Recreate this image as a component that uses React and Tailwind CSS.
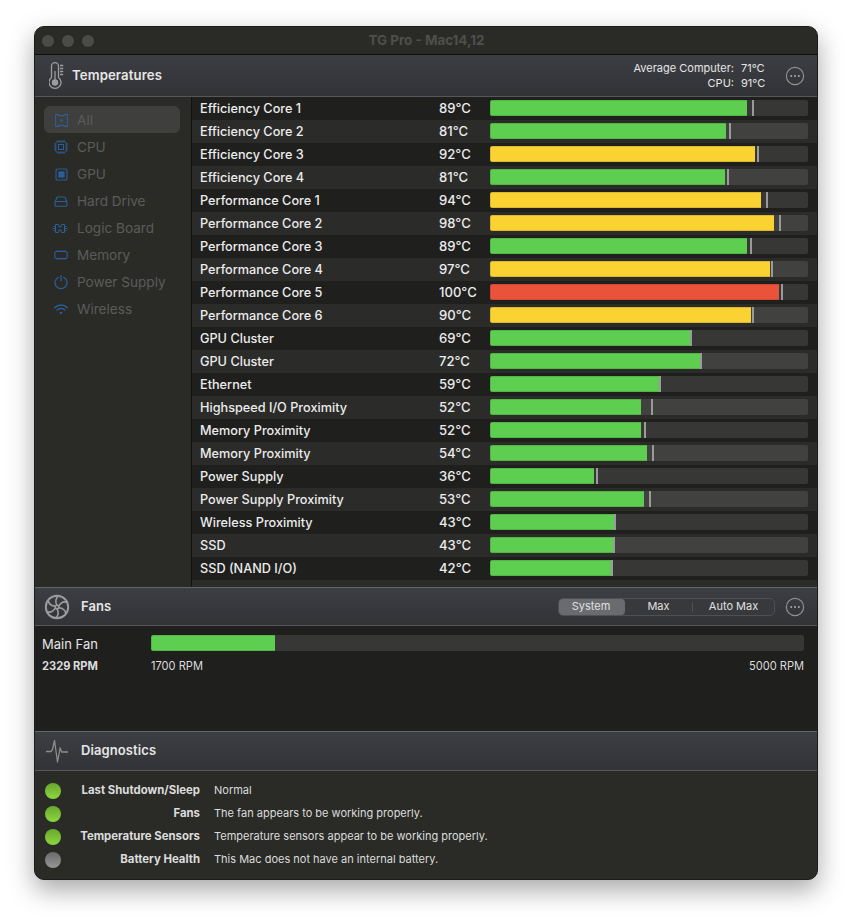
import React from "react";

const rows = [
  ["Efficiency Core 1", "89°C", 257, 262, "g"],
  ["Efficiency Core 2", "81°C", 236, 239, "g"],
  ["Efficiency Core 3", "92°C", 265, 267, "y"],
  ["Efficiency Core 4", "81°C", 235, 237, "g"],
  ["Performance Core 1", "94°C", 271, 276, "y"],
  ["Performance Core 2", "98°C", 284, 289, "y"],
  ["Performance Core 3", "89°C", 257, 260, "g"],
  ["Performance Core 4", "97°C", 280, 281, "y"],
  ["Performance Core 5", "100°C", 289, 291, "r"],
  ["Performance Core 6", "90°C", 261, 262, "y"],
  ["GPU Cluster", "69°C", 201, 200, "g"],
  ["GPU Cluster", "72°C", 210, 210, "g"],
  ["Ethernet", "59°C", 170, 169, "g"],
  ["Highspeed I/O Proximity", "52°C", 151, 161, "g"],
  ["Memory Proximity", "52°C", 151, 154, "g"],
  ["Memory Proximity", "54°C", 157, 162, "g"],
  ["Power Supply", "36°C", 104, 106, "g"],
  ["Power Supply Proximity", "53°C", 154, 159, "g"],
  ["Wireless Proximity", "43°C", 124, 124, "g"],
  ["SSD", "43°C", 123, 123, "g"],
  ["SSD (NAND I/O)", "42°C", 122, 121, "g"],
];

const fillCls = {
  g: "bg-[#5dce50] border-[#52b647]",
  y: "bg-[#fad232] border-[#dcb92c]",
  r: "bg-[#ea523a] border-[#cf4833]",
};

const blue = "#2b5f99";

function IconAll() {
  return (
    <svg width="13" height="13" viewBox="0 0 13 13" fill="none" stroke={blue} strokeWidth="1.1">
      <path d="M.6.6h3l.6 1h4.6l.6-1h3v11.8h-3l-.6-1H4.2l-.6 1h-3z" />
      <circle cx="6.5" cy="6.5" r="1.2" fill={blue} stroke="none" />
    </svg>
  );
}
function IconCpu() {
  return (
    <svg width="14" height="14" viewBox="0 0 14 14" fill="none" stroke={blue} strokeWidth="1">
      <rect x="1.8" y="1.8" width="10.4" height="10.4" rx="1.5" />
      <rect x="4.5" y="4.5" width="5" height="5" />
      <path d="M4 0v1.8M6 0v1.8M8 0v1.8M10 0v1.8M4 12.2V14M6 12.2V14M8 12.2V14M10 12.2V14M0 4h1.8M0 6h1.8M0 8h1.8M0 10h1.8M12.2 4H14M12.2 6H14M12.2 8H14M12.2 10H14" strokeWidth="0.8" />
    </svg>
  );
}
function IconGpu() {
  return (
    <svg width="13" height="13" viewBox="0 0 13 13" fill="none" stroke={blue} strokeWidth="1.1">
      <rect x="1" y="1" width="11" height="11" rx="1.5" />
      <rect x="3.4" y="3.4" width="6.2" height="6.2" fill={blue} stroke="none" />
    </svg>
  );
}
function IconDrive() {
  return (
    <svg width="14" height="11" viewBox="0 0 14 11" fill="none" stroke={blue} strokeWidth="1.1">
      <path d="M1 6l1.8-4.2A1.4 1.4 0 0 1 4 1h6a1.4 1.4 0 0 1 1.2.8L13 6" />
      <rect x="1" y="5.5" width="12" height="4.8" rx="1.4" />
    </svg>
  );
}
function IconBoard() {
  return (
    <svg width="16" height="11" viewBox="0 0 16 11" fill="none" stroke={blue} strokeWidth="1">
      <path d="M3.5 1.5h2.6a.8.8 0 0 1 .8.8V4h2.2V2.3a.8.8 0 0 1 .8-.8h2.6v8H9.9a.8.8 0 0 1-.8-.8V7H6.9v1.7a.8.8 0 0 1-.8.8H3.5z" />
      <path d="M1.5 3.5h2M1.5 7.5h2M12.5 3.5h2M12.5 7.5h2M0.5 5.5h3M12.5 5.5h3" strokeWidth="0.9" />
    </svg>
  );
}
function IconMem() {
  return (
    <svg width="14" height="10" viewBox="0 0 14 10" fill="none" stroke={blue} strokeWidth="1.1">
      <rect x="0.8" y="1.5" width="12.4" height="7" rx="1.5" />
      <path d="M3 0v1M5 0v1M7 0v1M9 0v1M11 0v1M3 9v1M5 9v1M7 9v1M9 9v1M11 9v1" strokeWidth="0.7" />
    </svg>
  );
}
function IconPower() {
  return (
    <svg width="14" height="14" viewBox="0 0 14 14" fill="none" stroke={blue} strokeWidth="1.2" strokeLinecap="round">
      <path d="M4.4 2.3a6 6 0 1 0 5.2 0" />
      <path d="M7 0.6v5.4" />
    </svg>
  );
}
function IconWifi() {
  return (
    <svg width="14" height="11" viewBox="0 0 14 11" fill="none" stroke={blue} strokeWidth="1.5" strokeLinecap="round">
      <path d="M0.8 3.6a9 9 0 0 1 12.4 0" />
      <path d="M3.2 6a5.6 5.6 0 0 1 7.6 0" />
      <path d="M7 10.2L5.4 8.4a2.4 2.4 0 0 1 3.2 0z" fill={blue} stroke="none" />
    </svg>
  );
}

const side = [
  ["All", IconAll],
  ["CPU", IconCpu],
  ["GPU", IconGpu],
  ["Hard Drive", IconDrive],
  ["Logic Board", IconBoard],
  ["Memory", IconMem],
  ["Power Supply", IconPower],
  ["Wireless", IconWifi],
];

function More() {
  return (
    <svg width="20" height="20" viewBox="0 0 20 20" fill="none">
      <circle cx="10" cy="10" r="8.6" stroke="#8f9092" strokeWidth="1.2" />
      <circle cx="6.2" cy="10" r="1" fill="#a8a9aa" />
      <circle cx="10" cy="10" r="1" fill="#a8a9aa" />
      <circle cx="13.8" cy="10" r="1" fill="#a8a9aa" />
    </svg>
  );
}

function Thermo() {
  return (
    <svg width="16" height="28" viewBox="0 0 16 28" fill="none" stroke="#9b9c9d">
      <path d="M2.5 15.5V4.2a3.5 3.5 0 0 1 7 0v11.3a6 6 0 1 1-7 0z" strokeWidth="1.3" />
      <circle cx="6" cy="20.5" r="3.2" fill="#9b9c9d" stroke="none" />
      <path d="M6 9v10" strokeWidth="1.3" />
      <path d="M11 3.5h3.2M11 6.5h3.2M11 9.5h3.2M11 12.5h3.2" strokeWidth="1.3" />
    </svg>
  );
}

function Fan() {
  return (
    <svg width="26" height="26" viewBox="0 0 26 26" fill="none" stroke="#9b9c9d" strokeWidth="1.6">
      <circle cx="13" cy="13" r="11.2" strokeWidth="2" />
      <circle cx="13" cy="13" r="1.8" />
      <path d="M13 11.2C11 8 11.5 4 14.5 1.8" />
      <path d="M14.7 12.2C16.5 8.8 20 7.2 23.6 8.4" />
      <path d="M14.7 13.8C18.5 14 21.4 16.4 22 20" />
      <path d="M13 14.8C15 18 14.5 22 11.5 24.2" />
      <path d="M11.3 13.8C9.5 17.2 6 18.8 2.4 17.6" />
      <path d="M11.3 12.2C7.5 12 4.6 9.6 4 6" />
    </svg>
  );
}

function Pulse() {
  return (
    <svg width="24" height="24" viewBox="0 0 24 24" fill="none" stroke="#8c8d8e" strokeWidth="1.3" strokeLinejoin="round">
      <path d="M1 12.5h5l1.5-2 2-9 3 21.5 2.6-14 1.6 4h6.3" />
    </svg>
  );
}

function Header({ icon, title, children, h, iconPad, titlePad }) {
  return (
    <div className={`${h} shrink-0 flex items-center border-t border-b border-t-[#646565] border-b-[#56575a] bg-gradient-to-b from-[#3d3e43] to-[#323337]`}>
      <div className={`w-[46px] flex justify-center shrink-0 ${iconPad}`}>{icon}</div>
      <div className={`text-[13px] font-semibold text-[#e6e6e6] tracking-[0.1px] ${titlePad}`}>{title}</div>
      <div className="ml-auto flex items-center">{children}</div>
    </div>
  );
}

const diag = [
  ["Last Shutdown/Sleep", "Normal", true],
  ["Fans", "The fan appears to be working properly.", true],
  ["Temperature Sensors", "Temperature sensors appear to be working properly.", true],
  ["Battery Health", "This Mac does not have an internal battery.", false],
];

export default function App() {
  return (
    <div className="w-[852px] h-[922px] bg-white pt-[26px] pl-[34px] overflow-hidden font-['Inter',sans-serif]">
      <div className="w-[784px] h-[854px] rounded-[10px] overflow-hidden flex flex-col bg-[#2a2b27] border border-[#1c1c1c] shadow-[0_10px_26px_rgba(0,0,0,0.35)]">
        {/* title bar */}
        <div className="h-[28px] shrink-0 flex items-center border-b border-[#0c0c0c] bg-[#2a2b27] pl-[7px] gap-[8px]">
          <div className="w-[12px] h-[12px] rounded-full bg-[#4b4c49]" />
          <div className="w-[12px] h-[12px] rounded-full bg-[#4b4c49]" />
          <div className="w-[12px] h-[12px] rounded-full bg-[#4b4c49]" />
          <div className="flex-1 text-center text-[13.4px] font-bold text-[#4e4f4d] pr-[66px]">TG Pro - Mac14,12</div>
        </div>

        {/* temperatures header */}
        <div className="h-[42px] shrink-0 flex items-center border-b border-[#56575a] bg-gradient-to-b from-[#3d3e43] to-[#323337]">
          <div className="w-[37px] flex justify-end shrink-0 pr-[7px]"><Thermo /></div>
          <div className="text-[13.2px] font-semibold text-[#e6e6e6] tracking-[0.1px]">Temperatures</div>
          <div className="ml-auto text-[11px] leading-[15px] text-[#e6e6e6] grid grid-cols-[auto_32px] gap-x-[7px] text-right">
            <span>Average Computer:</span><span className="text-left">71°C</span>
            <span>CPU:</span><span className="text-left">91°C</span>
          </div>
          <div className="ml-[12px] mr-[12px] flex"><More /></div>
        </div>

        {/* middle */}
        <div className="h-[490px] shrink-0 flex">
          <div className="w-[157px] shrink-0 border-r border-[#121212] pt-[9px] pl-[9px] pr-[11px]">
            {side.map(([label, Icon], i) => (
              <div key={label} className={`h-[27px] pt-[1px] flex items-center rounded-[6px] ${i === 0 ? "bg-[#3f3f3d]" : ""}`}>
                <div className="w-[33px] flex justify-end shrink-0 pr-[9px]"><Icon /></div>
                <span className="text-[13.6px] text-[#5b5c5a]">{label}</span>
              </div>
            ))}
          </div>
          <div className="flex-1 bg-[#2b2b2a] flex flex-col">
            {rows.map(([name, temp, fill, mark, c], i) => (
              <div key={i} className={`h-[23px] shrink-0 flex items-center ${i % 2 === 0 ? "bg-[#1f1f1e]" : "bg-[#2b2b2a]"}`}>
                <div className="w-[247px] pl-[8px] text-[12.7px] font-[450] text-[#ececec] shrink-0">{name}</div>
                <div className="w-[51px] text-[13.1px] font-[450] text-[#ececec] shrink-0">{temp}</div>
                <div className={`relative w-[318px] h-[16px] rounded-[2px] overflow-hidden mb-[1px] ${i % 2 === 0 ? "bg-[#373736]" : "bg-[#414140]"}`}>
                  <div className={`h-full border-y border-l rounded-l-[2px] ${fillCls[c]}`} style={{ width: fill }} />
                  <div className="absolute top-0 bottom-0 w-[2px] bg-[#9a9a9a]" style={{ left: mark }} />
                </div>
              </div>
            ))}
          </div>
        </div>

        {/* fans */}
        <Header h="h-[39px]" iconPad="pr-[2px]" titlePad="pt-[1px]" icon={<Fan />} title="Fans">
          <div className="w-[217px] h-[18px] rounded-[5px] border border-[#4f5054] flex items-center text-[11px] text-[#e0e0e0] bg-[#38393d]">
            <div className="w-[66px] h-full rounded-[4px] bg-[#6a6b6f] flex items-center justify-center pr-[2px]">System</div>
            <div className="w-[67px] text-center">Max</div>
            <div className="w-px h-[10px] bg-[#505155]" />
            <div className="flex-1 text-center">Auto Max</div>
          </div>
          <div className="ml-[10px] mr-[12px] flex"><More /></div>
        </Header>
        <div className="h-[105px] shrink-0 bg-[#1f1f1e] pl-[7px] pr-[13px] pt-[9px]">
          <div className="flex items-center h-[16px]">
            <div className="w-[109px] text-[13px] text-[#e6e6e6] pt-[4px]">Main Fan</div>
            <div className="flex-1 h-[16px] rounded-[2px] bg-[#373736] overflow-hidden">
              <div className="h-full w-[124px] bg-[#5dce50] border border-[#52b647] border-r-0 rounded-l-[2px]" />
            </div>
          </div>
          <div className="flex items-center mt-[7px] text-[11.1px] text-[#dcdcdc]">
            <div className="w-[109px] font-bold">2329 RPM</div>
            <div>1700 RPM</div>
            <div className="ml-auto">5000 RPM</div>
          </div>
        </div>

        {/* diagnostics */}
        <Header h="h-[40px]" iconPad="pr-[3px]" icon={<Pulse />} title="Diagnostics" />
        <div className="flex-1 pt-[8px] flex flex-col">
          {diag.map(([l, v, ok]) => (
            <div key={l} className="h-[23px] shrink-0 flex items-center text-[11px] text-[#dcdcdc]">
              <div className="w-[38px] flex justify-start pl-[10px] shrink-0">
                <div className={`w-[16px] h-[16px] rounded-full ${ok ? "bg-gradient-to-b from-[#6aa72f] to-[#8bd83e]" : "bg-gradient-to-b from-[#6a6a6a] to-[#979797]"}`} />
              </div>
              <div className="w-[127px] text-right font-bold shrink-0 text-[11.4px]">{l}</div>
              <div className="ml-[14px]">{v}</div>
            </div>
          ))}
        </div>
      </div>
    </div>
  );
}
